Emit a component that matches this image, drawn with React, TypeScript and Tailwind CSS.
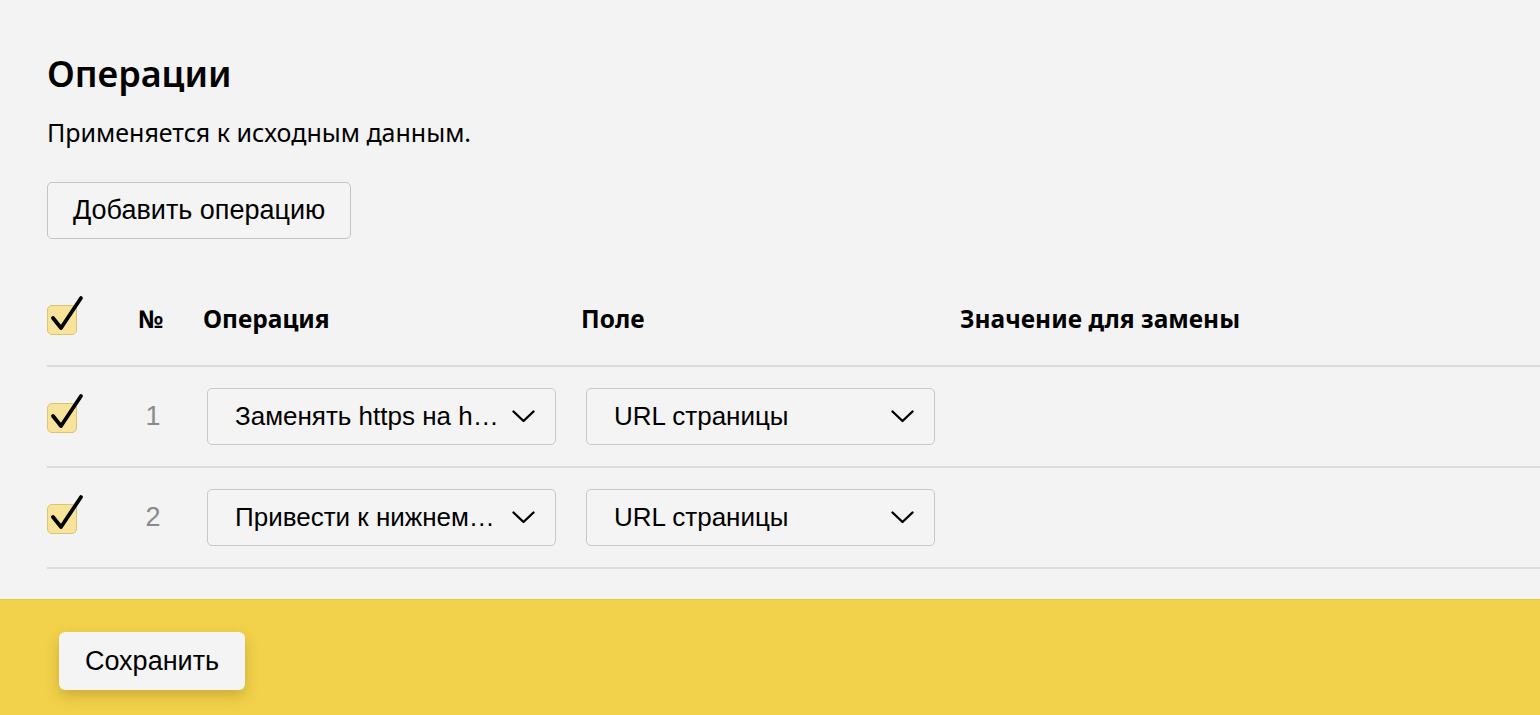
const ys = { fontFamily: '"Noto Sans", "Open Sans", sans-serif' }
const arial = { fontFamily: '"Liberation Sans", Arial, sans-serif' }

function Check() {
  return (
    <div className="relative w-[30px] h-[30px]">
      <div className="absolute inset-0 rounded-[5px] bg-[#f7e39a] border border-[#d8c477]" />
      <svg
        className="absolute left-0 top-[-8px] overflow-visible"
        width="40"
        height="40"
        viewBox="0 0 40 40"
      >
        <path
          d="M6 21 L14 31 L34 1"
          fill="none"
          stroke="#000"
          strokeWidth="3.8"
          strokeLinecap="round"
          strokeLinejoin="round"
        />
      </svg>
    </div>
  )
}

function Chevron() {
  return (
    <svg width="23" height="13" viewBox="0 0 23 13" className="shrink-0 ml-auto">
      <path
        d="M1.5 1.5 L11.5 11 L21.5 1.5"
        fill="none"
        stroke="#000"
        strokeWidth="2.4"
        strokeLinecap="round"
        strokeLinejoin="round"
      />
    </svg>
  )
}

function Select({ value }: { value: string }) {
  return (
    <div
      className="flex items-center w-[349px] h-[57px] pl-[27px] pr-[20px] rounded-[5px] border border-[#c8c8c8] bg-[#f4f4f4] text-[26px] text-black"
      style={arial}
    >
      <span className="whitespace-nowrap">{value}</span>
      <Chevron />
    </div>
  )
}

const rows = [
  { n: 1, op: 'Заменять https на h…', field: 'URL страницы' },
  { n: 2, op: 'Привести к нижнем…', field: 'URL страницы' },
]

export default function App() {
  return (
    <div className="w-[1540px] h-[715px] bg-[#f3f3f3] flex flex-col overflow-hidden">
      <div className="flex-1 pl-[47px] pt-[51px]">
        <h1 className="text-[36px] font-semibold text-black leading-[46px]" style={ys}>
          Операции
        </h1>
        <p className="mt-[20px] text-[25px] text-black leading-[30px]" style={ys}>
          Применяется к исходным данным.
        </p>
        <button
          className="mt-[35px] h-[57px] px-[25px] rounded-[5px] border border-[#c4c4c4] bg-[#f4f4f4] text-[27px] text-black"
          style={arial}
        >
          Добавить операцию
        </button>

        <div className="mt-[40px]">
          <div
            className="flex items-center h-[88px] pb-[6px] border-b-2 border-[#dcdcdc] text-[24.5px] font-bold text-black"
            style={ys}
          >
            <div className="w-[91px] pt-[2px]">
              <Check />
            </div>
            <div className="w-[65px]">№</div>
            <div className="w-[378px]">Операция</div>
            <div className="w-[379px]">Поле</div>
            <div>Значение для замены</div>
          </div>
          {rows.map((r) => (
            <div
              key={r.n}
              className="flex items-center h-[101px] border-b-2 border-[#dcdcdc]"
            >
              <div className="w-[91px] pt-[2px]">
                <Check />
              </div>
              <div className="w-[30px] text-center text-[27px] text-[#8a8a8a]" style={arial}>
                {r.n}
              </div>
              <div className="w-[418px] pl-[39px]">
                <Select value={r.op} />
              </div>
              <Select value={r.field} />
            </div>
          ))}
        </div>
      </div>

      <div className="h-[116px] bg-[#f2d24b] border-t border-[#e6c845] pl-[59px] pt-[32px]">
        <button
          className="h-[58px] w-[186px] rounded-[6px] bg-[#f4f4f4] text-[27px] text-black shadow-[0_6px_14px_rgba(120,90,0,0.3)]"
          style={arial}
        >
          Сохранить
        </button>
      </div>
    </div>
  )
}
